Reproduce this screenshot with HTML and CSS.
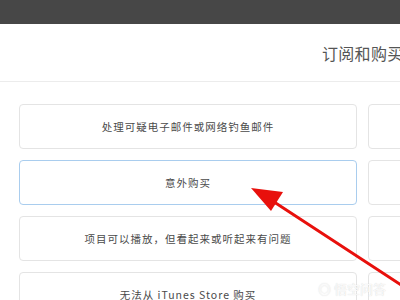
FILE: index.html
```html
<!DOCTYPE html>
<html lang="zh">
<head>
<meta charset="utf-8">
<link rel="stylesheet" href="styles.css">
</head>
<body>
<div class="page">
  <div class="topbar"></div>
  <div class="header"><span class="title">订阅和购买项目</span></div>
  <div class="grid">
    <div class="card">处理可疑电子邮件或网络钓鱼邮件</div>
    <div class="card"></div>
    <div class="card active">意外购买</div>
    <div class="card"></div>
    <div class="card">项目可以播放，但看起来或听起来有问题</div>
    <div class="card"></div>
    <div class="card">无法从 iTunes Store 购买</div>
    <div class="card"></div>
  </div>
</div>
<svg class="arrow" width="400" height="300" viewBox="0 0 400 300">
  <line x1="268" y1="198" x2="412" y2="292" stroke="#e8100c" stroke-width="3" stroke-linecap="round"/>
  <polygon points="251,188 283,192 271,211" fill="#e8100c"/>
</svg>
<div class="watermark">◎ 悟空问答</div>
</body>
</html>
```
FILE: styles.css
```css
html, body {
  margin: 0;
  padding: 0;
  width: 400px;
  height: 300px;
  overflow: hidden;
  background: #fff;
  font-family: "Noto Sans CJK SC", "Liberation Sans", sans-serif;
}
.page {
  width: 760px;
}
.topbar {
  height: 24px;
  background: #474747;
}
.header {
  height: 57px;
  border-bottom: 1px solid #ececec;
  display: flex;
  align-items: center;
  padding-left: 322px;
}
.title {
  font-size: 16px;
  color: #555;
  letter-spacing: 0.3px;
  white-space: nowrap;
}
.grid {
  display: grid;
  grid-template-columns: 338px 338px;
  grid-auto-rows: 45px;
  column-gap: 11px;
  row-gap: 11px;
  padding: 22px 0 0 19px;
}
.card {
  border: 1px solid #e4e4e4;
  border-radius: 4px;
  display: flex;
  align-items: center;
  justify-content: center;
  font-size: 10.5px;
  color: #4a4a4a;
  letter-spacing: 1px;
  box-sizing: border-box;
}
.card.active {
  border-color: #a9cdee;
}
.arrow {
  position: absolute;
  left: 0;
  top: 0;
}
.watermark {
  position: absolute;
  left: 318px;
  top: 279px;
  font-size: 13px;
  color: rgba(255,255,255,0.9);
  text-shadow: 0 0 1px #ccc;
  white-space: nowrap;
}
```
